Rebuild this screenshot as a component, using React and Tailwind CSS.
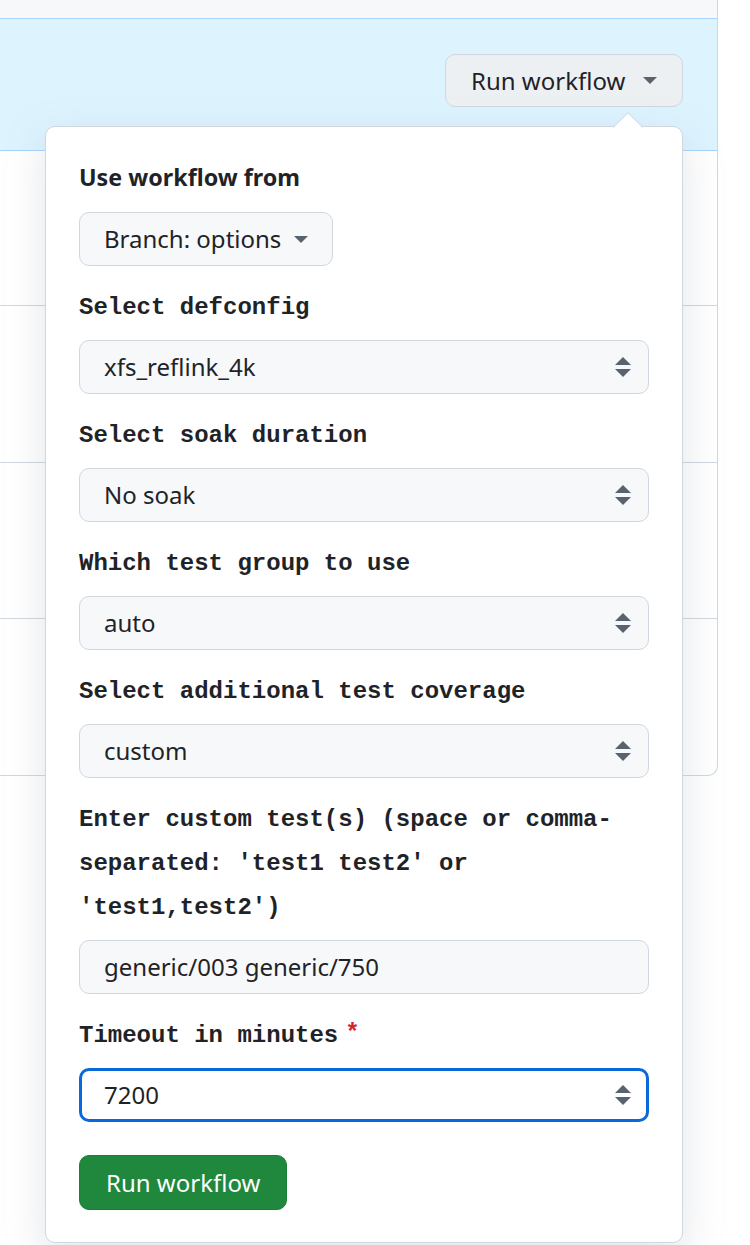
const sans = { fontFamily: '"Noto Sans", "Open Sans", sans-serif' };

const Caret = ({ className }) => (
    <svg viewBox="0 0 14 7" className={className} fill="currentColor">
        <path d="M0 0 L14 0 L7 7 Z" />
    </svg>
);

const UpDown = () => (
    <svg viewBox="0 0 16 20" className="w-4 h-5 text-[#59636e]" fill="currentColor">
        <path d="M8 0 L16 8 L0 8 Z" />
        <path d="M0 12 L16 12 L8 20 Z" />
    </svg>
);

const Label = ({ children, required }) => (
    <div className="mt-[20px] mb-[10px] text-[24px] leading-[44px] font-bold text-[#1f2328] font-['Liberation_Mono',monospace]">
        {children}
        {required && <span className="text-[#d1242f] ml-[7px] relative top-[-2px]">*</span>}
    </div>
);

const Select = ({ value, focused }) => (
    <div
        className={`h-[54px] flex items-center justify-between rounded-[10px] text-[24px] text-[#1f2328] ${focused
            ? 'border-[3px] border-[#0969da] bg-white pl-[22px] pr-[15px]'
            : 'border border-[#d0d7de] bg-[#f6f8fa] pl-[24px] pr-[17px]'
            }`}
        style={sans}
    >
        <span>{value}</span>
        <UpDown />
    </div>
);

const fields = [
    { label: 'Select defconfig', value: 'xfs_reflink_4k' },
    { label: 'Select soak duration', value: 'No soak' },
    { label: 'Which test group to use', value: 'auto' },
    { label: 'Select additional test coverage', value: 'custom' }
];

export default function App() {
    return (
        <div className="relative w-[750px] h-[1245px] overflow-hidden bg-white" style={sans}>
            {/* Background list */}
            <div className="w-[718px] border-r border-b border-[#d0d7de] rounded-br-[10px] overflow-hidden">
                <div className="h-[19px] bg-[#f6f8fa] border-b border-[#a6d4fa]" />
                <div className="h-[132px] bg-[#ddf4ff] border-b border-[#a6d4fa] flex justify-end items-start pt-[35px] pr-[34px]">
                    <button className="h-[53px] w-[238px] flex items-center pl-[25px] pr-[25px] justify-between rounded-[10px] border border-[#cfd6dd] bg-[#edf0f3] text-[24px] text-[#1f2328]">
                        <span>Run workflow</span>
                        <Caret className="w-[14px] h-[7px] text-[#59636e]" />
                    </button>
                </div>
                <div className="h-[155px] border-b border-[#d0d7de]" />
                <div className="h-[157px] border-b border-[#d0d7de]" />
                <div className="h-[156px] border-b border-[#d0d7de]" />
                <div className="h-[156px]" />
            </div>

            {/* Popup */}
            <div className="absolute left-[45px] top-[126px] w-[638px] bg-white border border-[#d0d7de] rounded-[10px] px-[33px] pt-[32px] pb-[32px] shadow-[0_13px_40px_rgba(140,149,159,0.25)]">
                <svg className="absolute -top-[15px] left-[567px] w-[30px] h-[16px]" viewBox="0 0 30 16">
                    <path d="M0 16 L15 1 L30 16 Z" fill="white" />
                    <path d="M0 15.5 L15 0.8 L30 15.5" fill="none" stroke="#d0d7de" strokeWidth="1" />
                </svg>

                <div className="text-[23.3px] leading-[36px] font-bold text-[#1f2328]">Use workflow from</div>
                <button className="mt-[17px] h-[54px] w-[254px] flex items-center justify-between pl-[24px] pr-[24px] rounded-[10px] border border-[#d0d7de] bg-[#f6f8fa] text-[24px] text-[#1f2328]">
                    <span>Branch: options</span>
                    <Caret className="w-[14px] h-[7px] text-[#59636e]" />
                </button>

                {fields.map(f => (
                    <div key={f.label}>
                        <Label>{f.label}</Label>
                        <Select value={f.value} />
                    </div>
                ))}

                <Label>Enter custom test(s) (space or comma-separated: 'test1 test2' or 'test1,test2')</Label>
                <div className="h-[54px] flex items-center rounded-[10px] pl-[24px] border border-[#d0d7de] bg-[#f6f8fa] text-[24px] text-[#1f2328]">
                    generic/003 generic/750
                </div>

                <Label required>Timeout in minutes</Label>
                <Select value="7200" focused />

                <button className="mt-[33px] h-[55px] px-[26px] rounded-[10px] bg-[#1f883d] border border-[#1a7f37] text-white text-[24px]">
                    Run workflow
                </button>
            </div>
        </div>
    );
}
